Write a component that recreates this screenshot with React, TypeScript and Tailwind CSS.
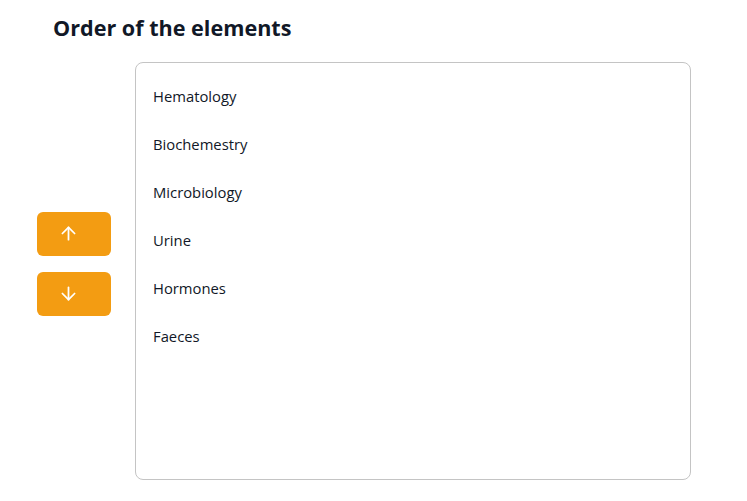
import { ArrowDown, ArrowUp } from 'lucide-react'

const items = ['Hematology', 'Biochemestry', 'Microbiology', 'Urine', 'Hormones', 'Faeces']

export default function App() {
  return (
    <div className="w-[747px] h-[501px] bg-white text-[#111827] font-['Open_Sans','Noto_Sans',sans-serif]">
      <h1 className="pl-[53px] pt-[13px] text-[21.6px] leading-[30px] font-bold">Order of the elements</h1>
      <div className="flex mt-[19px] pl-[37px]">
        <div className="flex flex-col gap-4 mt-[150px]">
          <button
            type="button"
            className="w-[74px] h-[44px] rounded-[6px] bg-[#f39c12] text-white flex items-center justify-center pr-[11px] pb-[1px]"
          >
            <ArrowUp size={21} strokeWidth={2} />
          </button>
          <button
            type="button"
            className="w-[74px] h-[44px] rounded-[6px] bg-[#f39c12] text-white flex items-center justify-center pr-[11px] pb-[1px]"
          >
            <ArrowDown size={21} strokeWidth={2} />
          </button>
        </div>
        <div className="ml-[24px] w-[556px] h-[418px] border border-[#c4c4c4] rounded-[8px] pt-[9px]">
          {items.map((item) => (
            <div key={item} className="h-[48px] flex items-center px-[17px] text-[14.8px]">
              {item}
            </div>
          ))}
        </div>
      </div>
    </div>
  )
}
